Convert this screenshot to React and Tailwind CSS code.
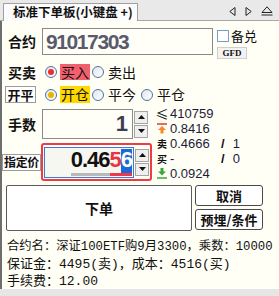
import React from "react";

const CJK = "font-['Noto_Sans_CJK_SC',sans-serif]";
const NUM = "font-['Liberation_Sans',Arial,sans-serif]";

function Radio({ dot }) {
  return (
    <span className="flex h-[12px] w-[12px] shrink-0 items-center justify-center rounded-full border border-[#51749c] bg-gradient-to-br from-[#dfe6ee] to-white">
      {dot}
    </span>
  );
}

function Tri({ down }) {
  return (
    <svg width="7" height="4" viewBox="0 0 7 4">
      <path d={down ? "M0 0H7L3.5 4Z" : "M0 4H7L3.5 0Z"} fill="#111" />
    </svg>
  );
}

function Spinner() {
  return (
    <div className="flex flex-col gap-[1px]">
      <button className="flex h-[13px] w-[14px] items-center justify-center border border-[#a5a5a5] bg-[#efefef]">
        <Tri />
      </button>
      <button className="flex h-[13px] w-[14px] items-center justify-center border border-[#a5a5a5] bg-[#efefef]">
        <Tri down />
      </button>
    </div>
  );
}

function InfoRow({ icon, value, tail }) {
  return (
    <div className="flex h-[15px] items-center">
      <span className="flex w-[16px] justify-center">{icon}</span>
      <span className={`w-[51px] text-[13px] leading-none text-[#1b1b3a] ${NUM}`}>{value}</span>
      {tail !== undefined && (
        <>
          <span className={`text-[13px] font-bold leading-none text-[#111] ${NUM}`}>/</span>
          <span className={`ml-[8px] text-[13px] leading-none text-[#1b1b3a] ${NUM}`}>{tail}</span>
        </>
      )}
    </div>
  );
}

export default function App() {
  return (
    <div className={`flex h-[296px] w-[279px] flex-col overflow-hidden bg-[#e6e6e6] ${CJK}`}>
      {/* title bar */}
      <div className="flex h-[21px] shrink-0 items-end border-b border-[#a8a8a8] bg-[#e9e9e9] pl-[3px]">
        <div className="-mb-[1px] flex h-[18px] items-center whitespace-nowrap border border-b-0 border-[#a0a0a0] bg-[#fcfcfc] pl-[9px] pr-[4px] text-[12.5px] font-bold leading-none text-[#111]">
          标准下单板(小键盘 +)
        </div>
        <div className="ml-auto mb-[4px] mr-[6px] flex items-center gap-[9px]">
          <svg width="7" height="9" viewBox="0 0 7 9">
            <path d="M6 0.5V8.5L0.8 4.5Z" fill="none" stroke="#222" />
          </svg>
          <svg width="7" height="9" viewBox="0 0 7 9">
            <path d="M1 0.5V8.5L6.2 4.5Z" fill="none" stroke="#222" />
          </svg>
          <svg width="12" height="10" viewBox="0 0 12 10">
            <path d="M1 6.5H11L6 0.8Z" fill="none" stroke="#222" />
            <path d="M0.5 9H11.5" stroke="#222" />
          </svg>
        </div>
      </div>

      {/* body */}
      <div className="flex h-[268px] shrink-0 flex-col border-l-2 border-[#6e6e6e] bg-[#fffff6]">
        {/* 合约 */}
        <div className="mt-[7px] flex h-[27px] items-start">
          <span className="flex h-[27px] w-[40px] items-center pl-[6px] text-[14px] font-bold text-[#111]">合约</span>
          <div className="flex h-[27px] w-[171px] items-center border border-[#8a8a8a] bg-[#fffff8] pl-[3px]">
            <span className={`text-[21px] font-bold leading-none tracking-[-1.4px] text-[#5a5a6c] ${NUM}`}>91017303</span>
          </div>
          <div className="ml-[4px] flex flex-col">
            <div className="mt-[1px] flex h-[13px] items-center gap-[2px]">
              <span className="h-[12px] w-[12px] border border-[#7b9cc6] bg-white" />
              <span className="text-[13px] leading-none text-[#111]">备兑</span>
            </div>
            <button className="mt-[5px] flex h-[12px] w-[30px] items-center justify-center border border-[#cfcfcf] bg-[#f3f3f3] font-['Liberation_Serif',serif] text-[9px] font-bold leading-none text-[#111]">
              GFD
            </button>
          </div>
        </div>

        {/* 买卖 */}
        <div className="mt-[9px] flex h-[16px] items-center">
          <span className="w-[40px] pl-[6px] text-[14px] font-bold leading-none text-[#111]">买卖</span>
          <div className="ml-[3px] flex items-center gap-[3px]">
            <Radio dot={<span className="h-[6px] w-[6px] rounded-full bg-[#ee2d2d]" />} />
            <span className="bg-[#f2606e] px-[1px] text-[14px] leading-[16px] text-[#111]">买入</span>
          </div>
          <div className="ml-[2px] flex items-center gap-[3px]">
            <Radio />
            <span className="px-[1px] text-[14px] leading-[16px] text-[#111]">卖出</span>
          </div>
        </div>

        {/* 开平 */}
        <div className="mt-[6px] flex h-[18px] items-center">
          <div className="ml-[3px] flex h-[17px] w-[31px] items-center justify-center border border-[#9c9c9c] bg-white text-[13px] font-bold leading-none text-[#111]">
            开平
          </div>
          <div className="ml-[9px] flex items-center gap-[3px]">
            <Radio dot={<span className="h-[6px] w-[6px] rounded-full bg-[#e8b400]" />} />
            <span className="bg-[#ffd800] px-[1px] text-[14px] leading-[17px] text-[#111]">开仓</span>
          </div>
          <div className="ml-[2px] flex items-center gap-[3px]">
            <Radio />
            <span className="px-[1px] text-[14px] leading-[17px] text-[#111]">平今</span>
          </div>
          <div className="ml-[4px] flex items-center gap-[3px]">
            <Radio />
            <span className="px-[1px] text-[14px] leading-[17px] text-[#111]">平仓</span>
          </div>
        </div>

        {/* 手数 / 指定价 + 行情 */}
        <div className="mt-[3px] flex">
          <div className="flex w-[151px] flex-col">
            <div className="mt-[3px] flex h-[30px] items-center">
              <span className="w-[40px] pl-[6px] text-[14px] font-bold leading-none text-[#111]">手数</span>
              <div className="flex h-[30px] w-[91px] items-center justify-end border border-[#8a8a8a] bg-[#fffff8] pr-[4px]">
                <span className={`text-[22px] font-bold leading-none text-[#3d3d52] ${NUM}`}>1</span>
              </div>
              <div className="ml-[1px]">
                <Spinner />
              </div>
            </div>
            <div className="mt-[4px] flex h-[38px] items-center">
              <div className="flex h-[17px] w-[39px] shrink-0 items-center justify-center overflow-hidden whitespace-nowrap border border-[#9c9c9c] bg-white text-[12px] font-bold leading-none tracking-[-0.3px] text-[#111]">
                指定价
              </div>
              <div className="flex h-[38px] w-[111px] items-center rounded-[3px] border-2 border-[#ee3b45] pl-[1px]">
                <div className="flex h-[31px] w-[90px] items-center justify-end border border-[#3b7bd4] bg-[#f7f7f2] pr-[1px]">
                  <span className={`flex items-end text-[22px] font-bold leading-[22px] tracking-[-1px] ${NUM}`}>
                    <span className="border-b-[3px] border-[#b9b9b9] pb-[2px] text-[#111]">0.46</span>
                    <span className="border-b-[3px] border-[#ec3a4a] pb-[2px] text-[#ee3344]">5</span>
                    <span className="border-b-[3px] border-[#ec3a4a] bg-[#1a6bd6] pb-[2px] text-white">6</span>
                  </span>
                </div>
                <div className="ml-[1px]">
                  <Spinner />
                </div>
              </div>
            </div>
          </div>

          <div className="ml-[1px] flex flex-col">
            <InfoRow
              icon={<span className="text-[13px] leading-none text-[#111]">≤</span>}
              value="410759"
            />
            <InfoRow
              icon={
                <svg width="10" height="11" viewBox="0 0 10 11">
                  <path d="M0 1H10" stroke="#e23a2a" strokeWidth="1.5" />
                  <path d="M5 3L9 7H6.5V10.5H3.5V7H1Z" fill="#f08a2a" />
                </svg>
              }
              value="0.8416"
            />
            <InfoRow
              icon={<span className="text-[10px] font-bold leading-none text-[#111]">卖</span>}
              value="0.4666"
              tail="1"
            />
            <InfoRow
              icon={<span className="text-[10px] font-bold leading-none text-[#111]">买</span>}
              value="-"
              tail="0"
            />
            <InfoRow
              icon={
                <svg width="10" height="11" viewBox="0 0 10 11">
                  <path d="M3.5 0V3.5H1L5 7.5L9 3.5H6.5V0Z" fill="#3aa63a" />
                  <path d="M0 10H10" stroke="#3aa63a" strokeWidth="1.5" />
                </svg>
              }
              value="0.0924"
            />
          </div>
        </div>

        {/* buttons */}
        <div className="ml-[4px] mt-[4px] flex gap-[3px]">
          <button className="flex h-[46px] w-[186px] items-center justify-center rounded-[2px] border border-[#5c5c5c] bg-white text-[14px] font-bold text-[#111]">
            下单
          </button>
          <div className="flex flex-col gap-[3px]">
            <button className="flex h-[21px] w-[68px] items-center justify-center rounded-[3px] border border-[#4a4a4a] bg-white text-[13px] font-bold leading-none text-[#111]">
              取消
            </button>
            <button className="flex h-[21px] w-[68px] items-center justify-center rounded-[3px] border border-[#4a4a4a] bg-white text-[13px] font-bold leading-none text-[#111]">
              预埋/条件
            </button>
          </div>
        </div>

        {/* info text */}
        <div className="ml-[5px] mt-[8px] flex flex-col font-['Liberation_Mono','Noto_Sans_CJK_SC',monospace] text-[13px] leading-[17px] text-[#111]">
          <span className="whitespace-nowrap text-[12.3px]">合约名：深证100ETF购9月3300，乘数：10000</span>
          <span className="whitespace-nowrap">保证金：4495(卖)，成本：4516(买)</span>
          <span className="whitespace-nowrap">手续费：12.00</span>
        </div>
      </div>
    </div>
  );
}
